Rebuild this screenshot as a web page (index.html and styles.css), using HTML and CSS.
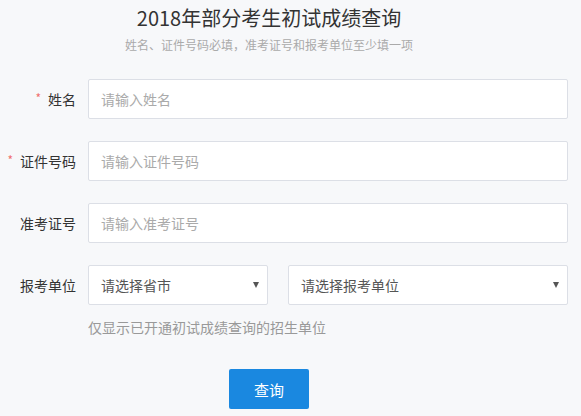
FILE: index.html
```html
<!DOCTYPE html>
<html lang="zh-CN">
<head>
<meta charset="utf-8">
<title>2018年部分考生初试成绩查询</title>
<link rel="stylesheet" href="styles.css">
</head>
<body>
<div class="page">
  <h1 class="title">2018年部分考生初试成绩查询</h1>
  <p class="subtitle">姓名、证件号码必填，准考证号和报考单位至少填一项</p>
  <form class="form">
    <div class="row">
      <label class="label"><span class="req">*</span>姓名</label>
      <input class="input" type="text" placeholder="请输入姓名">
    </div>
    <div class="row">
      <label class="label"><span class="req">*</span>证件号码</label>
      <input class="input" type="text" placeholder="请输入证件号码">
    </div>
    <div class="row">
      <label class="label">准考证号</label>
      <input class="input" type="text" placeholder="请输入准考证号">
    </div>
    <div class="row row-top">
      <label class="label label-select">报考单位</label>
      <div class="field">
        <div class="selects">
          <div class="select select-sm"><span>请选择省市</span><i class="caret"></i></div>
          <div class="select select-lg"><span>请选择报考单位</span><i class="caret"></i></div>
        </div>
        <p class="hint">仅显示已开通初试成绩查询的招生单位</p>
      </div>
    </div>
    <div class="actions">
      <button type="button" class="btn">查询</button>
    </div>
  </form>
</div>
</body>
</html>
```

FILE: styles.css
```css
* { box-sizing: border-box; }
html, body {
  margin: 0;
  padding: 0;
  background: #f7f8fa;
}
body {
  font-family: "Microsoft YaHei", "Noto Sans CJK SC", "Noto Sans", sans-serif;
  color: #333;
}
.page {
  width: 538px;
}
.title {
  margin: 0;
  font-size: 20px;
  font-weight: normal;
  line-height: 36px;
  text-align: center;
  color: #333;
}
.subtitle {
  margin: 0;
  font-size: 12px;
  line-height: 18px;
  text-align: center;
  color: #aaa;
}
.form {
  margin-top: 25px;
  width: 568px;
}
.row {
  display: flex;
  align-items: center;
  margin-bottom: 22px;
}
.row-top {
  align-items: flex-start;
  margin-bottom: 0;
}
.label {
  width: 88px;
  padding-right: 12px;
  text-align: right;
  font-size: 14px;
  color: #333;
  flex: none;
}
.label-select {
  line-height: 40px;
}
.req {
  color: #f07070;
  font-size: 12px;
  margin-right: 7px;
  position: relative;
  top: -2px;
}
.input {
  width: 480px;
  height: 40px;
  border: 1px solid #dcdfe6;
  border-radius: 2px;
  background: #fff;
  padding: 0 12px;
  font-family: inherit;
  font-size: 14px;
  color: #333;
  outline: none;
}
.input::placeholder {
  color: #aaa;
}
.field {
  display: flex;
  flex-direction: column;
}
.selects {
  display: flex;
  gap: 20px;
}
.select {
  height: 40px;
  border: 1px solid #dcdfe6;
  border-radius: 2px;
  background: #fff;
  display: flex;
  align-items: center;
  justify-content: space-between;
  padding: 0 8px 0 12px;
  font-size: 14px;
  color: #555;
}
.select-sm { width: 180px; }
.select-lg { width: 280px; }
.caret {
  width: 0;
  height: 0;
  border-left: 3px solid transparent;
  border-right: 3px solid transparent;
  border-top: 6px solid #555;
}
.hint {
  margin: 12px 0 0;
  font-size: 14px;
  line-height: 20px;
  color: #999;
}
.actions {
  width: 538px;
  display: flex;
  justify-content: center;
  margin-top: 32px;
}
.btn {
  width: 80px;
  height: 40px;
  border: none;
  border-radius: 2px;
  background: #1a88e0;
  color: #fff;
  font-family: inherit;
  font-size: 15px;
  cursor: pointer;
}
```
